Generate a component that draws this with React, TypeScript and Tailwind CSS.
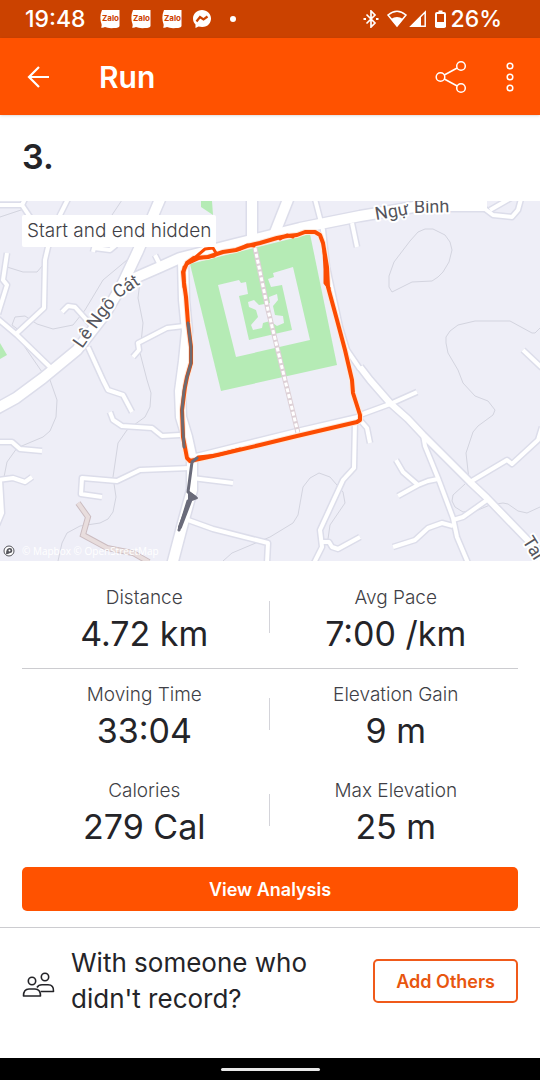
import type { ReactNode } from 'react'

const minorRoads = [
    'M0 4 L22 4 L25 -2',
    'M22 4 L34 22',
    'M68 -2 L60 14 L48 46 L45 59 L44 107 L17 132',
    'M7 52 L3 79 L7 84 L-2 113',
    'M-2 118 L17 134 L50 166',
    'M62 111 L68 105 L75 106 L92 125',
    'M88 146 L103 179 L108 189 L123 194 L132 211',
    'M184 125 L167 127 L138 142 L139 149 L133 156',
    'M155 54 L160 64',
    'M93 51 L94 47 L110 49 L116 44',
    'M110 211 L113 219 L122 225 L152 227 L162 235 L180 234',
    'M-2 241 L12 241 L20 248 L42 250',
    'M-2 279 L13 277 L25 281 L32 276',
    'M0 279 L2 312 L-3 324',
    'M190 267 L140 269 L117 280 L82 277 L81 293 L102 296',
    'M192 277 L233 282',
    'M188 319 L213 328 L268 342 L267 362',
    'M355 220 L354 267 L343 279 L320 329 L322 346 L314 362',
    'M320 341 L329 341 L332 346 L338 348 L360 336',
    'M352 22 L357 46',
    'M360 214 L390 203 L417 191',
    'M360 219 L367 227 L370 242',
    'M423 234 L425 245 L438 277 L453 317 L457 336 L468 362',
    'M396 259 L403 271 L418 284',
    'M398 295 L418 284 L428 280 L438 278',
    'M470 281 L507 259 L512 263 L538 239 L542 226',
    'M453 319 L463 316 L487 299',
    'M393 346 L415 339 L428 327 L442 322 L453 325',
    'M523 149 L542 167',
    'M485 8 L493 14 L512 16 L518 9 L521 -2',
    'M490 9 L511 -3',
    'M315 -2 L323 29 L327 66 L340 126 L347 149 L360 168',
]

const midRoads = [
    'M360 166 L370 179 L390 202 L408 218 L423 234 L470 281 L487 297 L542 354',
    'M192 257 L297 231 L362 216',
]

const majorRoads = [
    'M-4 208 L16 197 L43 177 L77 149 L105 113 L122 84 L138 50 L161 -4',
    'M122 88 L137 76 L160 66 L180 57 L235 43 L300 27 L360 15 L420 5 L487 5',
    'M252 -4 L252 38',
    'M289 -4 L274 34',
    'M183 60 L184 99 L187 130 L184 160 L180 190 L181 216 L187 236 L192 259 L192 289 L183 322 L172 364',
]

const contours = [
    'M425 28 L433 28 L445 34 L450 41 L452 49 L449 61 L443 71 L438 76 L432 80 L412 81 L402 86 L392 91 L389 86 L389 75 L394 61 L410 40 L418 31 Z',
    'M540 127 L535 132 L532 132 L510 120 L475 120 L458 124 L450 130 L446 136 L446 142 L448 152 L458 169 L463 182 L475 195 L488 200 L495 209 L493 214 L478 225 L473 231 L466 252 L469 279',
    'M465 283 L453 294 L452 300 L455 306 L463 311 L478 309 L490 304 L503 302 L508 303 L518 310 L527 312 L540 306',
    'M223 360 L232 352 L270 336 L293 322 L298 314 L303 286 L310 277 L319 272 L330 276 L343 291 L345 302 L330 324 L328 338',
    'M50 179 L57 199 L56 216 L50 230 L43 236 L17 247 L7 261 L4 276',
    'M147 179 L151 192 L150 206 L145 216 L127 229 L118 242 L113 276 L116 296 L113 311 L108 318 L100 322 L80 325 L67 332 L62 342 L58 360',
    'M140 80 L138 97 L143 122 L140 152 L147 179',
    'M127 59 L103 79 L85 109 L73 124 L53 128 L37 123 L25 115 L15 116 L12 124 L20 130',
    'M7 66 L23 71 L37 71 L43 64',
    'M20 139 L42 171',
    'M122 -1 L108 20 L90 46',
    'M0 16 L24 8',
]

const route =
    'M184 82 L183 71 L187 62 L194 57 L208 56 L223 51 L236 49 L247 45 L260 42 L277 37 L287 35 L297 34 L305 31 L315 31 L320 34 L323 42 L327 66 L328 86 L337 119 L345 149 L352 179 L353 192 L360 214 L360 219 L357 221 L297 235 L260 244 L213 255 L190 260 L187 257 L183 236 L182 209 L185 186 L187 176 L191 162 L191 146 L188 122 L186 96 Z'

function RouteMap() {
    return (
        <svg viewBox="0 0 540 360" className="block w-full" role="img" aria-label="Route map">
            <rect width="540" height="360" fill="#eeeef7" />
            <g fill="#b5ebb5">
                <path d="M201 0 H212 L213 14 L201 6 Z" />
                <path d="M0 142 L7 154 L0 158 Z" />
                <path d="M190 63 L310 33 L337 164 L221 190 Z" />
            </g>
            <g fill="none" stroke="#d3d4df" strokeWidth="1">
                {contours.map((d) => <path key={d} d={d} />)}
            </g>

            <path d="M78 302 L88 316 L83 334 L107 347 L133 352 L149 361" fill="none" stroke="#cbbcc0" strokeWidth="6" />
            <path d="M78 302 L88 316 L83 334 L107 347 L133 352 L149 361" fill="none" stroke="#e8dddd" strokeWidth="4" />

            {/* road casings go first so that junctions stay open */}
            <g fill="none" stroke="#dcddea" strokeLinejoin="round">
                {minorRoads.map((d) => <path key={d} d={d} strokeWidth="7" />)}
                {midRoads.map((d) => <path key={d} d={d} strokeWidth="9" />)}
                {majorRoads.map((d) => <path key={d} d={d} strokeWidth="13" />)}
            </g>
            <g fill="none" stroke="#fff" strokeLinejoin="round">
                {minorRoads.map((d) => <path key={d} d={d} strokeWidth="4" />)}
                {midRoads.map((d) => <path key={d} d={d} strokeWidth="6" />)}
                {majorRoads.map((d) => <path key={d} d={d} strokeWidth="10" />)}
            </g>

            <g fill="#eeeef7">
                <path d="M218 84 L239 79 L241 82 L246 81 L248 93 L239 95 L249 139 L292 129 L282 84 L271 86 L268 78 L274 76 L273 72 L293 66 L310 139 L236 156 Z" />
                <path d="M248 101 L254 99 L259 104 L270 102 L269 96 L277 93 L278 99 L273 105 L275 114 L283 115 L284 122 L277 125 L270 120 L263 122 L262 127 L253 129 L251 124 L258 116 L256 109 L249 106 Z" />
            </g>
            <path d="M255 47 L268 109 L277 146 L285 179 L298 232" fill="none" stroke="#ddd0d6" strokeWidth="5" />
            <path d="M255 47 L268 109 L277 146 L285 179 L298 232" fill="none" stroke="#fff" strokeWidth="3" strokeDasharray="4 2" />

            <g fill="none" strokeLinejoin="round" strokeLinecap="round">
                <path d={route} stroke="#fde9dc" strokeWidth="6" />
                <path d={route} stroke="#fc4c02" strokeWidth="4" />
                <path d="M191 60 L198 54 L205 48 L213 47 L216 52 M187 63 L200 57 L214 55 M240 48 L247 44 L254 45 M280 38 L287 34 L293 36 M324 50 L325 68 L325 82 L329 87 M184 66 L184 86 M198 256 L218 254 L240 248" stroke="#fc4c02" strokeWidth="3" />
                <path d="M188 122 L191 146 L191 162 L187 176 L184 190 L182 209 L183 230 L184 246" stroke="#6f6a70" strokeWidth="3" />
                <path d="M197 257 L192 261 L188 291 L195 296 L188 300 L179 329" stroke="#6a6b7a" strokeWidth="3" />
                <path d="M189 291 L197 297 L189 300 Z" fill="#6a6b7a" stroke="#6a6b7a" strokeWidth="2" />
                <path d="M190 300 L180 326" stroke="#6a6b7a" strokeWidth="4" />
            </g>

            <defs>
                <path id="street-west" d="M82 148 L104 117 L122 95 L150 77" />
                <path id="street-north" d="M376 19 L400 15 L415 12 L465 11" />
            </defs>
            <g className="font-['Roboto',sans-serif]" fontSize="18" fill="#55555c" stroke="#fff" strokeWidth="4" strokeLinejoin="round" paintOrder="stroke">
                <text><textPath href="#street-west">Lê Ngô Cát</textPath></text>
                <text><textPath href="#street-north">Ngự Bình</textPath></text>
                <text transform="translate(522 340) rotate(58)">Tan</text>
            </g>
        </svg>
    )
}

function ZaloIcon() {
    return (
        <svg width="20" height="20" viewBox="0 0 20 20" aria-hidden="true">
            <path d="M2 1 H19.500 V17 Q19 19 14 19 Q8 19.500 5 18 Q3 19 1 18.500 Q2 17 1.500 15 Q-1 8 2 1 Z" fill="#fff" />
            <text x="10.500" y="12" textAnchor="middle" fontSize="8" fontWeight="700" fill="#cb4200" className="font-['Inter',sans-serif]">Zalo</text>
        </svg>
    )
}

function StatusBar() {
    return (
        <div className="flex h-[38px] items-center bg-[#cb4200] pr-[38px] pl-[25px] text-[23px] font-medium text-white">
            <span>19:48</span>
            <div className="ml-3.5 flex items-center gap-[11px]">
                <ZaloIcon />
                <ZaloIcon />
                <ZaloIcon />
                <svg width="18" height="20" viewBox="0 0 18 20" aria-hidden="true">
                    <path d="M9 1 C4 1 0 4.700 0 9.500 C0 12 1 14 2.500 15.500 V19 L5.500 17.500 C14 19.500 18 14.500 18 9.500 C18 4.700 14 1 9 1 Z" fill="#fff" />
                    <path d="M3.500 12.500 L7 8 L10.500 10.500 L14.500 7.500" fill="none" stroke="#cb4200" strokeWidth="2.200" />
                </svg>
                <span className="ml-2 size-1.5 rounded-full bg-white" />
            </div>
            <div className="ml-auto flex items-center">
                <svg width="16" height="18" viewBox="0 0 16 18" className="mr-2" fill="none" stroke="#fff" strokeWidth="1.700" aria-hidden="true">
                    <path d="M3.500 4.500 L12 13 L8 17 V1 L12 5 L3.500 13.500" />
                    <path d="M0.500 9 H3 M13 9 H15.500" strokeWidth="2" />
                </svg>
                <svg width="20" height="18" viewBox="0 0 20 18" className="mr-0.5" aria-hidden="true">
                    <path d="M1 5 Q10 -2.500 19 5 L10 16 Z" fill="none" stroke="#fff" strokeWidth="1.500" />
                    <path d="M4 9 Q10 5 16 9 L10 16.500 Z" fill="#fff" />
                </svg>
                <svg width="18" height="18" viewBox="0 0 18 18" className="mr-2" aria-hidden="true">
                    <path d="M2 16.200 L16.200 2 V16.200 Z" fill="none" stroke="#fff" strokeWidth="1.500" />
                    <path d="M1 17 L12 6 V17 Z" fill="#fff" />
                </svg>
                <svg width="11" height="18" viewBox="0 0 11 18" className="mr-1" aria-hidden="true">
                    <path d="M3.500 0.500 H7.500 V3 H3.500 Z M0 12 H11 V17 H0 Z" fill="#fff" />
                    <rect x="1" y="3" width="9" height="14" rx="1" fill="none" stroke="#fff" strokeWidth="2" />
                </svg>
                <span>26%</span>
            </div>
        </div>
    )
}

function AppBar() {
    return (
        <header className="relative flex h-[77px] items-center bg-[#ff5200] pr-[25px] pl-[22px] text-white shadow">
            <button type="button" aria-label="Back" className="flex size-8 items-center justify-center">
                <svg width="24" height="24" viewBox="0 0 24 24" fill="none" stroke="currentColor" strokeWidth="2.200">
                    <path d="M23 12 H3 M13 2 L3 12 L13 22" />
                </svg>
            </button>
            <h1 className="ml-[45px] text-3xl font-semibold">Run</h1>
            <button type="button" aria-label="Share" className="ml-auto">
                <svg width="32" height="34" viewBox="0 0 32 34" fill="none" stroke="currentColor" strokeWidth="1.500">
                    <circle cx="5.500" cy="17" r="4.300" />
                    <circle cx="26" cy="6" r="4.300" />
                    <circle cx="26" cy="28" r="4.300" />
                    <path d="M9.300 15 L22.200 8 M9.300 19 L22.200 26" />
                </svg>
            </button>
            <button type="button" aria-label="More options" className="ml-[38px]">
                <svg width="10" height="30" viewBox="0 0 10 30" fill="none" stroke="currentColor" strokeWidth="1.500">
                    <circle cx="5" cy="4" r="2.800" />
                    <circle cx="5" cy="15" r="2.800" />
                    <circle cx="5" cy="26" r="2.800" />
                </svg>
            </button>
        </header>
    )
}

function Stat({ label, children }: { label: string; children: ReactNode }) {
    return (
        <div className="flex-1 text-center">
            <dt className="text-[19px] leading-6 font-light text-[#3f3f46]">{label}</dt>
            <dd className="mt-1 text-[34px] leading-10 text-[#242428]">{children}</dd>
        </div>
    )
}

function StatRow({ children }: { children: [ReactNode, ReactNode] }) {
    return (
        <div className="flex h-24 items-center">
            {children[0]}
            <span className="mr-1 mb-1.5 ml-0.5 h-8 w-px bg-[#d4d4da]" />
            {children[1]}
        </div>
    )
}

export default function App() {
    return (
        <div className="bg-white font-['Inter',sans-serif] text-[#242428]">
            <StatusBar />
            <AppBar />

            <h2 className="px-[22px] pt-5 pb-[22px] text-[34px] leading-[44px] font-semibold">3.</h2>

            <section className="relative">
                <RouteMap />
                <p className="absolute top-3.5 left-[22px] rounded-xs bg-white px-[5px] text-[19px] leading-8 font-light text-[#3f3f46]">
                    Start and end hidden
                </p>
                <div className="absolute bottom-0.5 left-[3px] flex items-center gap-[7px] text-[10px] leading-4 text-white">
                    <svg width="12" height="12" viewBox="0 0 12 12" aria-hidden="true">
                        <circle cx="6" cy="6" r="5" fill="#fff" stroke="#55555c" />
                        <path d="M3 9 Q3 3 6.500 3 A2.500 2.500 0 1 1 7 8 Q5 9.500 3 9 Z" fill="#55555c" />
                        <circle cx="6.500" cy="5.500" r="1" fill="#fff" />
                    </svg>
                    <span className="font-['Open_Sans',sans-serif]">
                        <a href="#mapbox">© Mapbox</a> <a href="#osm">© OpenStreetMap</a>
                    </span>
                </div>
            </section>

            <dl className="px-[22px] pt-[11px]">
                <StatRow>
                    <Stat label="Distance">4.72 km</Stat>
                    <Stat label="Avg Pace">7:00 /km</Stat>
                </StatRow>
                <div className="border-t border-[#ccccd0]">
                    <StatRow>
                        <Stat label="Moving Time">33:04</Stat>
                        <Stat label="Elevation Gain">9 m</Stat>
                    </StatRow>
                </div>
                <StatRow>
                    <Stat label="Calories">279 Cal</Stat>
                    <Stat label="Max Elevation">25 m</Stat>
                </StatRow>
            </dl>

            <div className="border-b border-[#ccccd0] px-[22px] pt-1.5 pb-4">
                <button type="button" className="h-11 w-full rounded-[5px] bg-[#ff5200] text-[18px] font-semibold text-white">
                    View Analysis
                </button>
            </div>

            <section className="flex items-center px-[22px] pt-[17px] pb-[41px]">
                <svg width="33" height="32" viewBox="0 0 33 32" fill="none" stroke="#242428" strokeWidth="1.600" className="shrink-0" aria-hidden="true">
                    <circle cx="10" cy="16" r="3.700" />
                    <circle cx="23" cy="12" r="3.700" />
                    <path d="M1.500 31 Q1.500 24 7 24 H13 Q18.500 24 18.500 31 Z" strokeLinejoin="round" />
                    <path d="M15 22.500 Q16.500 19.700 20 19.700 H26 Q32 19.700 31.500 26.500 H18.500" strokeLinejoin="round" />
                </svg>
                <p className="ml-4 w-64 text-[26px] leading-9">With someone who didn't record?</p>
                <button type="button" className="ml-auto h-11 rounded-[5px] border-2 border-[#f05a1a] px-[21px] text-[18px] font-semibold text-[#e8560f]">
                    Add Others
                </button>
            </section>

            <div className="flex h-[22px] items-center justify-center bg-black">
                <span className="h-[3px] w-[99px] rounded-full bg-[#e8e8e8]" />
            </div>
        </div>
    )
}
